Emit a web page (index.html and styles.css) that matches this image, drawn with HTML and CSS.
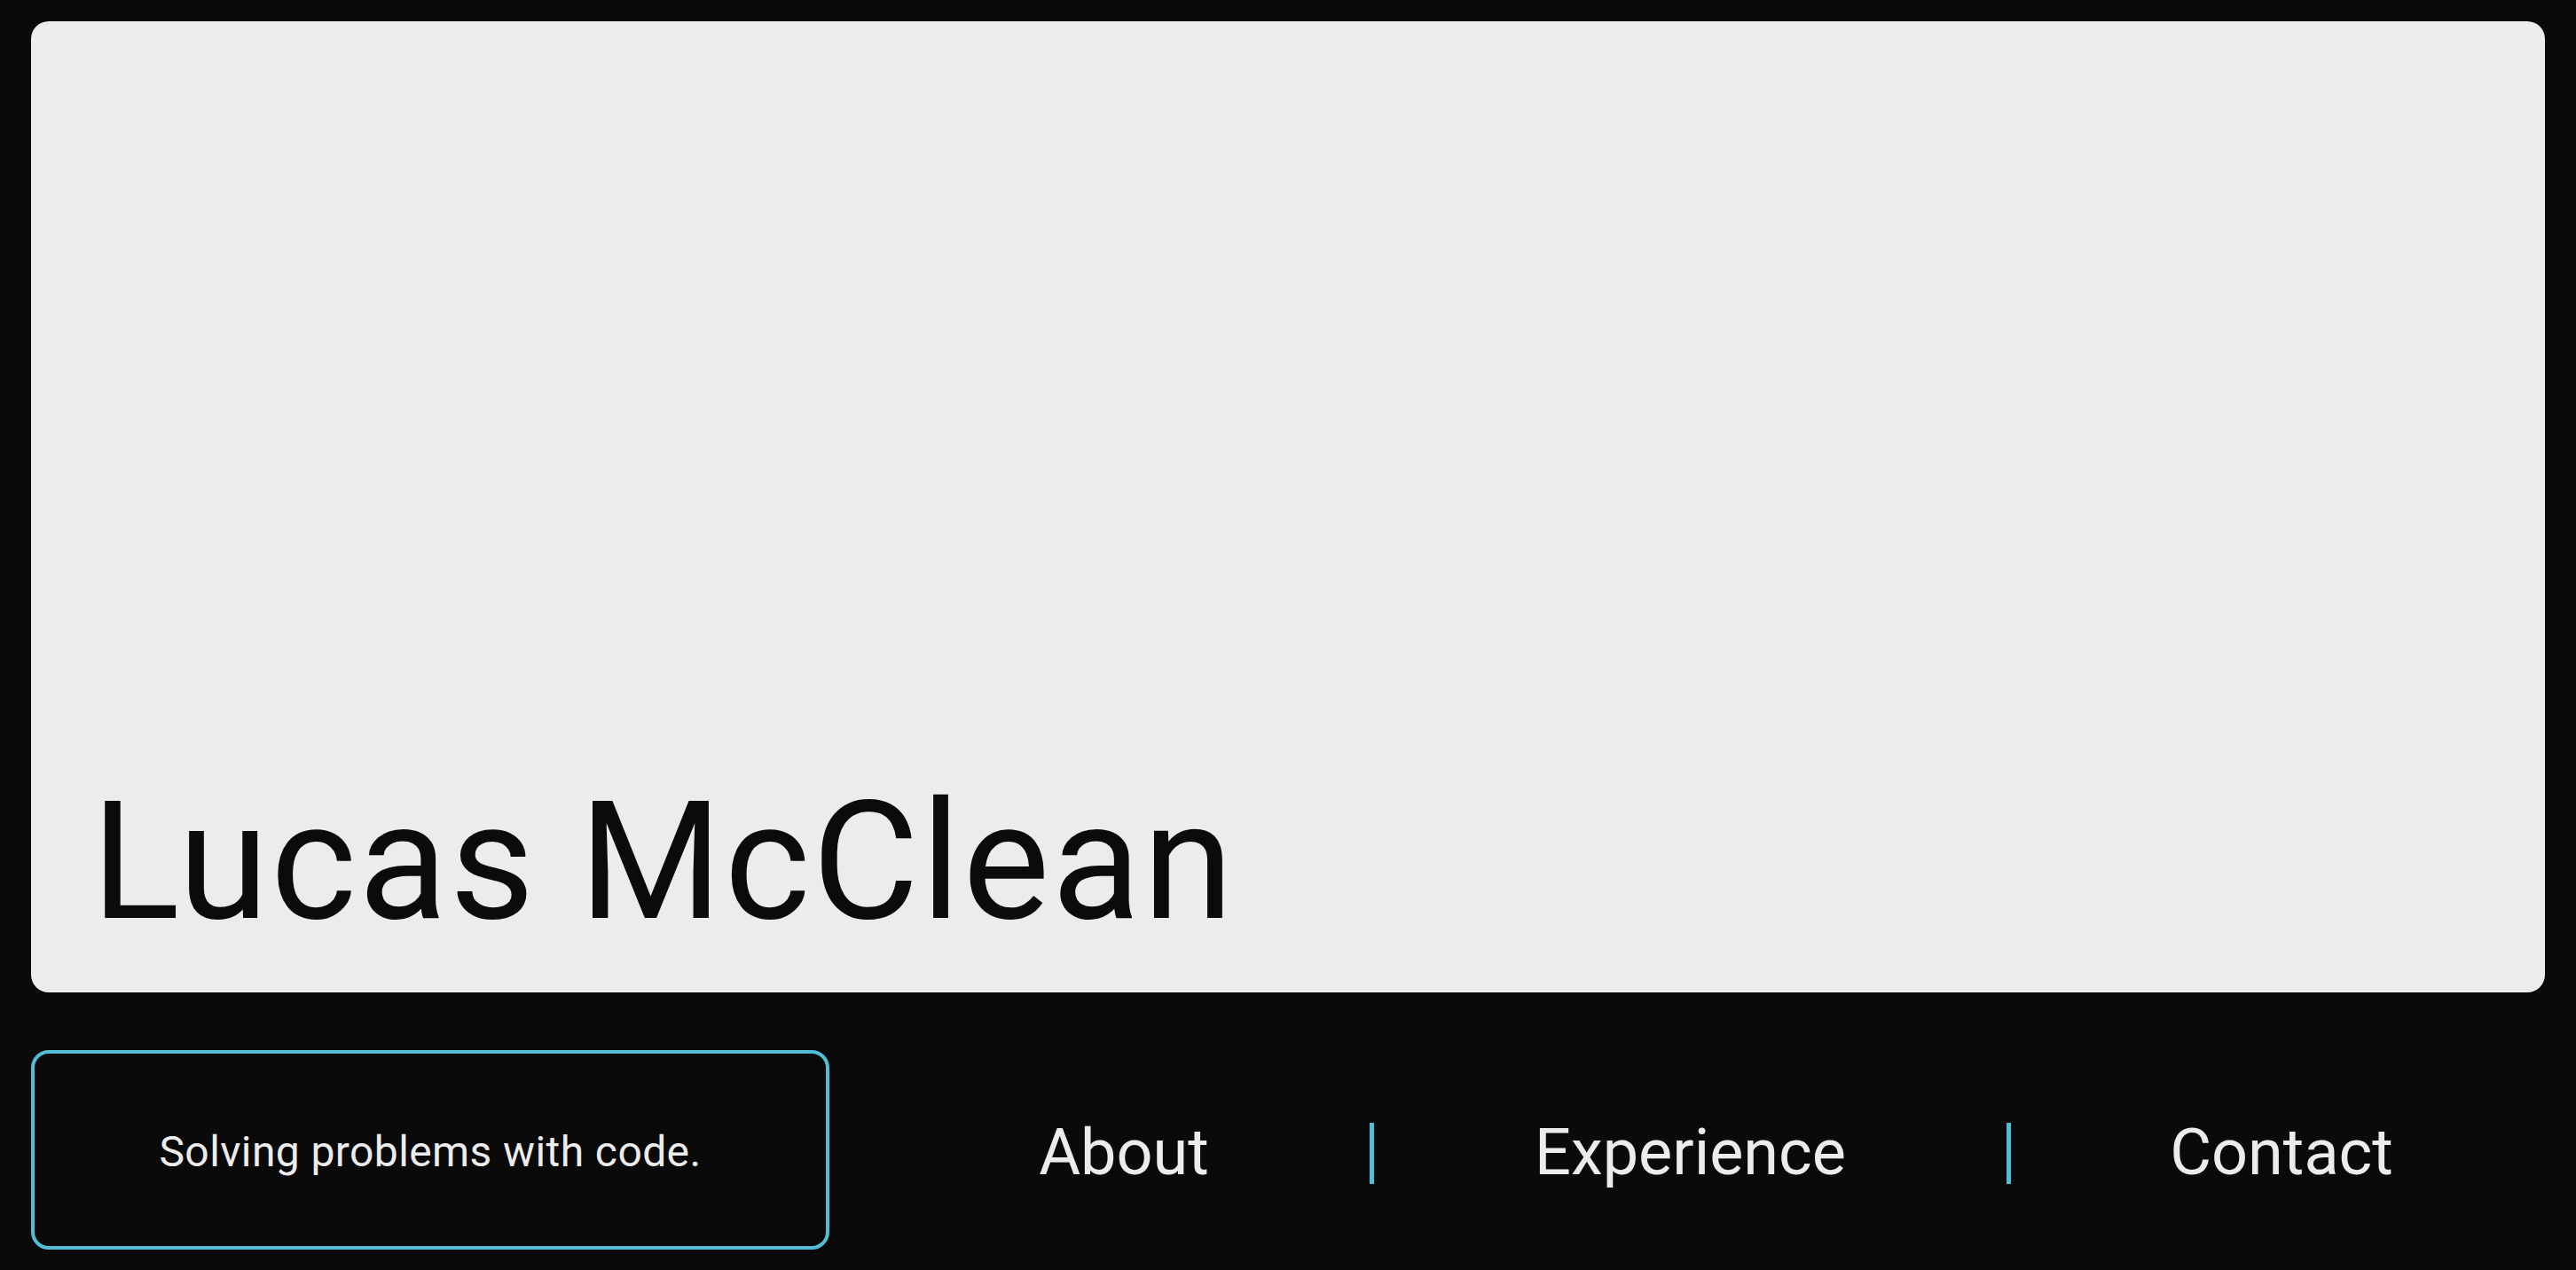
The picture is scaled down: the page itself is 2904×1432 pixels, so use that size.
FILE: index.html
```html
<!DOCTYPE html>
<html lang="en">
<head>
<meta charset="utf-8">
<title>Lucas McClean</title>
<link rel="stylesheet" href="styles.css">
</head>
<body>
  <main class="page">
    <section class="hero">
      <h1 class="name">Lucas McClean</h1>
    </section>
    <footer class="bottom">
      <div class="tagline">Solving problems with code.</div>
      <nav class="nav">
        <a class="nav-item nav-about" href="#about">About</a>
        <span class="sep"></span>
        <a class="nav-item nav-exp" href="#experience">Experience</a>
        <span class="sep"></span>
        <a class="nav-item nav-contact" href="#contact">Contact</a>
      </nav>
    </footer>
  </main>
</body>
</html>
```
FILE: styles.css
```css
* { box-sizing: border-box; }
html, body {
  margin: 0;
  padding: 0;
  background: #0a0a0a;
  overflow: hidden;
}
body {
  font-family: Roboto, "Noto Sans", sans-serif;
  color: #ececec;
}
.page {
  display: flex;
  flex-direction: column;
  padding: 24px 35px 23px 35px;
  height: 1432px;
  gap: 65px;
}
.hero {
  background: #ececec;
  border-radius: 20px;
  height: 1095px;
  flex: none;
  display: flex;
  align-items: flex-end;
  padding: 0 0 55px 68px;
}
.name {
  margin: 0;
  font-weight: 400;
  font-size: 185px;
  line-height: 1;
  color: #0b0b0b;
  letter-spacing: 2.2px;
}
.bottom {
  display: flex;
  height: 225px;
  flex: none;
  align-items: stretch;
}
.tagline {
  flex: none;
  width: 900px;
  border: 4px solid #52bbd6;
  border-radius: 20px;
  display: flex;
  align-items: center;
  justify-content: center;
  font-size: 48px;
  letter-spacing: 0.4px;
  padding-top: 4px;
}
.nav {
  flex: none;
  display: flex;
  align-items: center;
  margin-left: 55px;
}
.nav-item {
  flex: none;
  color: #ececec;
  text-decoration: none;
  font-size: 72px;
  text-align: center;
  padding-top: 6px;
}
.nav-about { width: 554px; }
.nav-exp { width: 713px; }
.nav-contact { width: 600px; padding-left: 10px; }
.sep {
  flex: none;
  width: 5px;
  height: 69px;
  background: #52bbd6;
  margin-top: 8px;
}
```
